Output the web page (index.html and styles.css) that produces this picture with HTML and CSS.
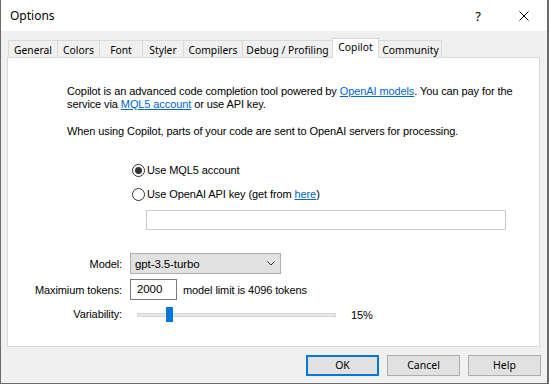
FILE: index.html
```html
<!DOCTYPE html>
<html lang="en">
<head>
    <meta charset="UTF-8">
    <title>Options</title>
    <link rel="stylesheet" href="styles.css">
</head>
<body>
    <div class="window">
        <!-- barra de titulo -->
        <div class="titlebar">
            <span class="title">Options</span>
            <span class="cap">?</span>
            <span class="cap">
                <svg width="10" height="10" viewBox="0 0 10 10"><path d="M0.5 0.5 L9.5 9.5 M9.5 0.5 L0.5 9.5" stroke="#000" stroke-width="1" fill="none"/></svg>
            </span>
        </div>

        <div class="dlg">
            <div class="tabs">
                <div class="tab w-general">General</div>
                <div class="tab w-colors">Colors</div>
                <div class="tab w-font">Font</div>
                <div class="tab w-styler">Styler</div>
                <div class="tab w-compilers">Compilers</div>
                <div class="tab w-debug">Debug / Profiling</div>
                <div class="tab active">Copilot</div>
                <div class="tab w-community">Community</div>
            </div>

            <div class="panel">
                <p class="txt">Copilot is an advanced code completion tool powered by <a href="#">OpenAI models</a>. You can pay for the<br>service via <a href="#">MQL5 account</a> or use API key.</p>
                <p class="txt second">When using Copilot, parts of your code are sent to OpenAI servers for processing.</p>

                <div class="radios">
                    <label class="radio"><span class="dot checked"></span><span>Use MQL5 account</span></label>
                    <label class="radio"><span class="dot"></span><span>Use OpenAI API key (get from <a href="#">here</a>)</span></label>
                    <div class="apikey"></div>
                </div>

                <div class="params">
                    <span class="lbl">Model:</span>
                    <div class="select">
                        <span>gpt-3.5-turbo</span>
                        <svg width="8" height="5" viewBox="0 0 8 5"><path d="M0.5 0.5 L4 4 L7.5 0.5" stroke="#333" stroke-width="1" fill="none"/></svg>
                    </div>

                    <span class="lbl">Maximium tokens:</span>
                    <div class="row">
                        <div class="num">2000</div>
                        <span>model limit is 4096 tokens</span>
                    </div>

                    <span class="lbl">Variability:</span>
                    <div class="row">
                        <div class="slider">
                            <div class="track"></div>
                            <div class="thumb" style="left: 29px"></div>
                        </div>
                        <span class="pct">15%</span>
                    </div>
                </div>
            </div>

            <div class="buttons">
                <div class="btn ok">OK</div>
                <div class="btn">Cancel</div>
                <div class="btn">Help</div>
            </div>
        </div>
    </div>
</body>
</html>
```

FILE: styles.css
```css
body {
    margin: 0;
    font-family: "Liberation Sans", Arial, sans-serif;
    font-size: 11px;
    letter-spacing: -0.1px;
    color: #000;
    background: #fff;
}

.window {
    width: 546px;
    height: 383px;
    border: 1px solid #6b6b6b;
    border-right-width: 2px;
    border-top: none;
    background: #f0f0f0;
    display: flex;
    flex-direction: column;
}

/* barra de titulo */
.titlebar {
    height: 31px;
    background: #fff;
    display: flex;
    align-items: center;
    padding-left: 9px;
    font-family: "Noto Sans", sans-serif;
    font-size: 12px;
    letter-spacing: 0;
}

.title {
    flex: 1;
    padding-bottom: 1px;
}

.cap {
    width: 46px;
    height: 31px;
    display: flex;
    align-items: center;
    justify-content: center;
    font-size: 13px;
}

.dlg {
    padding: 7px 6px 0 6px;
}

/* abas */
.tabs {
    display: flex;
    align-items: flex-end;
    margin-left: 1px;
    font-family: "Noto Sans", sans-serif;
    font-size: 10.3px;
    letter-spacing: 0;
}

.tab {
    box-sizing: border-box;
    height: 17px;
    border-left: 1px solid #d9d9d9;
    border-top: 1px solid #d9d9d9;
    text-align: center;
    line-height: 16px;
    padding-top: 1px;
}

.w-general { width: 49px; }
.w-colors { width: 42px; }
.w-font { width: 43px; }
.w-styler { width: 41px; }
.w-compilers { width: 59px; }
.w-debug { width: 90px; }
.w-community { width: 63px; border-right: 1px solid #d9d9d9; padding-left: 1px; }

.tab.active {
    width: 47px;
    height: 20px;
    margin-bottom: -1px;
    background: #fff;
    border-right: 1px solid #d9d9d9;
    position: relative;
    z-index: 1;
    padding-top: 0;
}

.tab.active + .tab {
    border-left: none;
}

.panel {
    box-sizing: border-box;
    width: 533px;
    height: 290px;
    background: #fff;
    border: 1px solid #d9d9d9;
    padding: 27px 0 0 59px;
}

.txt {
    margin: 0;
    line-height: 13px;
    white-space: nowrap;
}

.txt.second {
    margin-top: 14px;
}

a {
    color: #0066cc;
    text-decoration: underline;
}

.radios {
    margin-left: 65px;
    margin-top: 26px;
    display: flex;
    flex-direction: column;
    gap: 11px;
}

.radio {
    display: flex;
    align-items: center;
    height: 13px;
    line-height: 13px;
    gap: 2px;
}

.dot {
    box-sizing: border-box;
    width: 13px;
    height: 13px;
    border: 1px solid #333;
    border-radius: 50%;
    display: flex;
    align-items: center;
    justify-content: center;
}

.dot.checked::after {
    content: "";
    width: 7px;
    height: 7px;
    border-radius: 50%;
    background: #333;
}

.apikey {
    box-sizing: border-box;
    width: 360px;
    height: 20px;
    margin-left: 14px;
    margin-top: -2px;
    border: 1px solid #cccccc;
}

/* parametros do modelo */
.params {
    margin-left: -59px;
    margin-top: 23px;
    display: grid;
    grid-template-columns: 114px 1fr;
    column-gap: 8px;
    row-gap: 5px;
    align-items: center;
}

.lbl {
    text-align: right;
}

.select {
    box-sizing: border-box;
    width: 151px;
    height: 21px;
    background: #e1e1e1;
    border: 1px solid #adadad;
    display: flex;
    align-items: center;
    justify-content: space-between;
    padding: 0 4px 0 4px;
    font-size: 11.5px;
}

.select svg {
    margin-top: -1px;
    margin-right: 1px;
}

.row {
    display: flex;
    align-items: center;
    gap: 6px;
}

.num {
    box-sizing: border-box;
    width: 47px;
    height: 21px;
    border: 1px solid #7a7a7a;
    padding-left: 6px;
    line-height: 19px;
    font-size: 11.5px;
}

.slider {
    position: relative;
    width: 199px;
    height: 15px;
    margin-left: 7px;
    margin-top: 2px;
    display: flex;
    align-items: center;
}

.track {
    box-sizing: border-box;
    width: 100%;
    height: 4px;
    background: #e7e7e7;
    border: 1px solid #d6d6d6;
}

.thumb {
    position: absolute;
    top: 0;
    width: 7px;
    height: 15px;
    background: #0078d7;
}

.pct {
    margin-left: 9px;
    margin-top: 2px;
}

/* botoes */
.buttons {
    display: flex;
    justify-content: flex-end;
    gap: 8px;
    margin-top: 8px;
    font-family: "Noto Sans", sans-serif;
    font-size: 10.5px;
    letter-spacing: 0;
}

.btn {
    box-sizing: border-box;
    width: 73px;
    height: 21px;
    background: #e1e1e1;
    border: 1px solid #adadad;
    text-align: center;
    line-height: 19px;
}

.btn.ok {
    border: 2px solid #0078d7;
    line-height: 17px;
}
```
